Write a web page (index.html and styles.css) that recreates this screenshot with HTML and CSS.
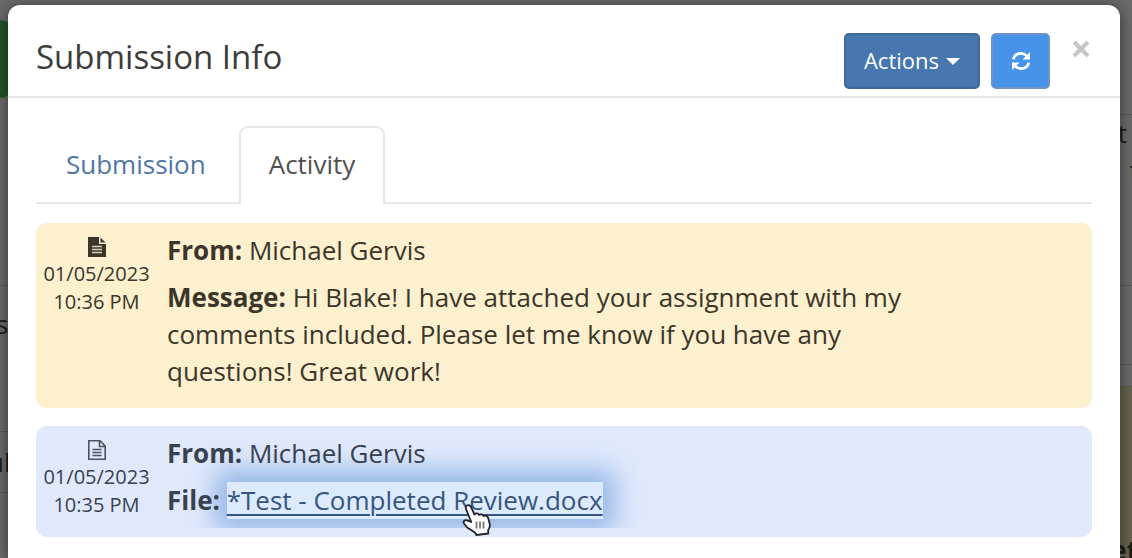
FILE: index.html
```html
<!DOCTYPE html>
<html lang="en">
<head>
<meta charset="utf-8">
<title>Submission Info</title>
<link rel="stylesheet" href="styles.css">
</head>
<body>
<div class="backdrop" aria-hidden="true">
  <span class="bg-pill"></span>
  <span class="bg-rule bg-rule-a"></span>
  <span class="bg-rule bg-rule-b"></span>
  <span class="bg-rule bg-rule-c"></span>
  <span class="bg-rule bg-rule-d"></span>
  <span class="bg-rule bg-rule-e"></span>
  <span class="bg-rule bg-rule-f"></span>
  <span class="bg-note"></span>
  <span class="bg-text bg-text-s">s</span>
  <span class="bg-text bg-text-ul">ul</span>
  <span class="bg-text bg-text-t">t</span>
  <span class="bg-text bg-text-f">f</span>
  <span class="bg-text bg-text-et">et</span>
</div>
<main class="modal" role="dialog" aria-labelledby="modal-title">
  <header class="modal-header">
    <h1 class="modal-title" id="modal-title">Submission Info</h1>
    <div class="toolbar">
      <button class="btn btn-actions" type="button">Actions <span class="caret"></span></button>
      <button class="btn btn-refresh" type="button" aria-label="Refresh">
        <svg width="20" height="20" viewBox="0 0 20 20" fill="none" stroke="#fff" stroke-width="2.6">
          <path d="M2.2 8.4C3 4.8 6 2.4 10 2.4c2.3 0 4.2.9 5.7 2.4"/>
          <path d="M17.8 11.6C17 15.2 14 17.6 10 17.6c-2.3 0-4.2-.9-5.7-2.4"/>
          <path d="M19 1v7.5h-7.5zM1 19v-7.5h7.5z" fill="#fff" stroke="none"/>
        </svg>
      </button>
      <button class="close" type="button" aria-label="Close">
        <svg width="18" height="18" viewBox="0 0 18 18" stroke="#c6c6c6" stroke-width="4.2"><path d="M2 2l14 14M16 2L2 16"/></svg>
      </button>
    </div>
  </header>
  <div class="modal-body">
    <nav class="tabs">
      <a class="tab" href="#submission">Submission</a>
      <a class="tab tab-active" href="#activity" aria-current="page">Activity</a>
    </nav>
    <article class="entry entry-message">
      <div class="stamp">
        <svg class="file-icon" width="18" height="20" viewBox="0 0 18 20"><path d="M0 0h11v7h7v13H0z" fill="#3b3629"/><path d="M12.5.5v5h5z" fill="#3b3629"/><path d="M4 9.5h10M4 12.5h10M4 15.5h10" stroke="#d8cfb3" stroke-width="1.5"/></svg>
        <time datetime="2023-01-05T22:36">01/05/2023<br>10:36 PM</time>
      </div>
      <div class="content">
        <p><strong>From:</strong> Michael Gervis</p>
        <p><strong>Message:</strong> Hi Blake! I have attached your assignment with my comments included. Please let me know if you have any questions! Great work!</p>
      </div>
    </article>
    <article class="entry entry-file">
      <div class="stamp">
        <svg class="file-icon" width="18" height="20" viewBox="0 0 18 20" fill="none" stroke="#4c535f" stroke-width="1.6"><path d="M.8.8h11.2l5.2 5.2v13.2H.8zM11.5.8v5.7h5.7"/><path d="M4.500 9.500h9M4.500 12.500h9M4.500 15.500h9"/></svg>
        <time datetime="2023-01-05T22:35">01/05/2023<br>10:35 PM</time>
      </div>
      <div class="content">
        <p><strong>From:</strong> Michael Gervis</p>
        <p><strong>File:</strong> <span class="file-wrap"><a class="file-link" href="#file">*Test - Completed Review.docx</a><svg class="pointer" width="30" height="34" viewBox="0 0 30 34"><path d="M5.500 3C7 1.300 9 2 10 4l3.500 7.500c1-1.500 3.700-1.500 4.700.5 1.500-1.200 3.700-.7 4.500 1 1.600-.8 3.800 0 4.400 1.800l1.500 5.500c.7 3-.2 5.200-1.500 7l.3 3.200-12 1.500-1.400-2.500L6.200 24.500l-3.200-4C1.800 18.800 3.700 16.500 5.900 17.300L10.300 19 5.200 6.500C4.600 5.100 4.700 4 5.500 3z" fill="#fff" stroke="#1f2328" stroke-width="1.8" stroke-linejoin="round"/><path d="M15.500 18.500v7M19 18.500v7M22.500 18.500v7" stroke="#777" stroke-width="1.8"/></svg></span></p>
      </div>
    </article>
  </div>
</main>
</body>
</html>
```
FILE: styles.css
```css
* { box-sizing: border-box; }

body {
  margin: 0;
  padding: 5px 12px 0 8px;
  background: #6a6a6a;
  color: #3c3c3c;
  font-family: "Open Sans", "Liberation Sans", sans-serif;
  font-size: 26px;
  line-height: 37px;
}

h1, p { margin: 0; }

/* dimmed page behind the dialog */
.backdrop {
  position: absolute;
  inset: 0;
  overflow: hidden;
  color: #1c1c1c;
}
.bg-pill, .bg-rule, .bg-note, .bg-text { position: absolute; }
.bg-pill { left: -68px; top: 20px; width: 80px; height: 78px; border-radius: 12px; background: #235427; }
.bg-rule { height: 1px; width: 12px; background: #575757; }
.bg-rule-a { right: 0; top: 114px; }
.bg-rule-b { right: 0; top: 285px; }
.bg-rule-c { right: 0; top: 364px; }
.bg-rule-d { left: 0; top: 431px; }
.bg-rule-e { left: 0; top: 492px; }
.bg-rule-f { left: 0; top: 285px; }
.bg-note { right: 0; top: 385px; width: 12px; bottom: 0; background: #666250; }
.bg-text-s { left: -4px; top: 306px; }
.bg-text-ul { left: -12px; top: 444px; }
.bg-text-t { right: 5px; top: 115px; }
.bg-text-f { right: -6px; top: 152px; }
.bg-text-et { right: -6px; top: 532px; font-weight: 700; }

.modal {
  position: relative;
  min-height: calc(100vh - 5px);
  background: #fff;
  border-radius: 12px 12px 0 0;
  box-shadow: 0 2px 14px rgba(0, 0, 0, .5);
}

.modal-header {
  display: flex;
  align-items: flex-start;
  justify-content: space-between;
  padding: 28px 30px 7px 28px;
  border-bottom: 2px solid #e7e7e7;
}
.modal-title {
  padding-top: 4px;
  font-size: 33px;
  font-weight: 400;
  line-height: 40px;
}
.toolbar {
  display: flex;
  align-items: flex-start;
  gap: 11px;
}
.btn {
  display: flex;
  align-items: center;
  justify-content: center;
  height: 56px;
  border-radius: 5px;
  color: #fff;
  font: inherit;
  font-size: 22px;
}
.btn-actions {
  gap: 7px;
  padding: 0 18px 2px;
  border: 2px solid #41699b;
  background: #4677af;
}
.caret {
  margin-top: 3px;
  border: 7px solid transparent;
  border-top-color: #fff;
  border-bottom: 0;
}
.btn-refresh {
  width: 59px;
  border: 2px solid #6d94c4;
  background: #4793ea;
}
.close {
  display: flex;
  margin: 7px 0 0 11px;
  padding: 0;
  border: 0;
  background: none;
}

.modal-body { padding: 28px 28px 20px; }

.tabs {
  display: flex;
  margin-bottom: 19px;
  border-bottom: 2px solid #e7e7e7;
}
.tab {
  margin-bottom: -2px;
  padding: 18px 28px 21px;
  border: 2px solid transparent;
  border-bottom: 0;
  border-radius: 9px 9px 0 0;
  color: #4f76a5;
  text-decoration: none;
}
.tab-active {
  margin-left: 3px;
  border-color: #e7e7e7;
  background: #fff;
  color: #505050;
}

.entry {
  display: flex;
  gap: 10px;
  padding: 9px 0;
  border-radius: 11px;
}
.entry + .entry { margin-top: 18px; }
.entry-message { background: #fcf0cf; color: #3b3629; }
.entry-file { background: #e0e9fc; color: #38414f; }

.stamp {
  width: 121px;
  padding-top: 5px;
  font-size: 20px;
  line-height: 28px;
  text-align: center;
}
.file-icon {
  display: block;
  margin: 0 auto 3px;
}
.content { width: 75%; }
.content p + p { margin: 10px 0 9px; }

.file-wrap {
  display: inline-block;
  position: relative;
}
.file-link {
  display: block;
  background: #dceafd;
  color: #37557f;
  text-decoration: underline;
  text-decoration-thickness: 2px;
  text-underline-offset: 4px;
  box-shadow: 0 0 26px 12px #94b7e6;
  clip-path: inset(-50px -50px -9px -50px);
}
.entry-file strong,
.entry-file p:first-child {
  position: relative;
  z-index: 1;
}
.pointer {
  position: absolute;
  right: 112px;
  bottom: -18px;
}
```
